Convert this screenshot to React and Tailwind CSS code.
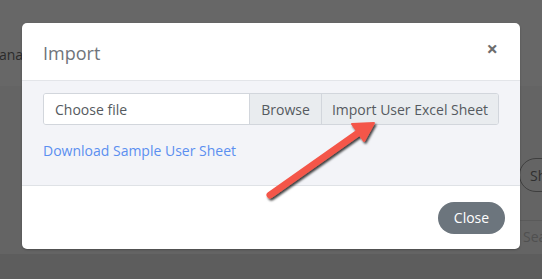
import React from "react";

const App = () => {
  return (
    <div
      className="relative w-[542px] h-[279px] overflow-hidden bg-[#666666]"
      style={{ fontFamily: '"Open Sans", sans-serif' }}
    >
      {/* Page behind the overlay */}
      <div className="absolute inset-0 flex flex-col">
        <div className="h-[86px] bg-[#676767] text-[14px] text-[#2b2b2b] pt-[44px]">
          <span className="-ml-[1px]">ana</span>
        </div>
        <div className="relative h-[168px] bg-[#646464]">
          <div className="absolute left-[519px] top-[72px] h-[34px] w-[60px] rounded-full border border-[#3f3f3f] pl-[10px] pt-[6px] text-[14px] text-[#2f2f2f]">
            Sh
          </div>
          <div className="absolute left-[510px] top-[134px] w-[40px] border-t border-[#5a5a5a] pl-[13px] pt-[5px] text-[14px] text-[#505050]">
            Sea
          </div>
        </div>
        <div className="flex-1 bg-[#5d5d5d]" />
      </div>

      {/* Modal */}
      <div className="absolute left-[22px] top-[23px] w-[498px] h-[226px] rounded-[5px] bg-white flex flex-col overflow-hidden shadow-[0_1px_2px_rgba(0,0,0,0.25)]">
        <div className="h-[58px] flex items-center justify-between pl-[21px] pr-[22px] border-b border-[#e3e5e9]">
          <span className="text-[18px] text-[#70747a] pt-[3px]">Import</span>
          <span className="text-[20px] font-bold text-[#6d6d6d] leading-none -mt-[6px]">×</span>
        </div>
        <div className="h-[105px] bg-[#f3f4f8] border-b border-[#dfe2e6] px-[21px] pt-[12px]">
          <div className="flex h-[32px] w-[456px] rounded-[3px] border border-[#d2d6dc] text-[14px] text-[#555a60] overflow-hidden">
            <div className="w-[205px] bg-white flex items-center pl-[11px]">Choose file</div>
            <div className="w-[72px] bg-[#e9ecef] border-l border-[#d2d6dc] flex items-center justify-center">
              Browse
            </div>
            <div className="flex-1 bg-[#e9ecef] border-l border-[#d2d6dc] flex items-center justify-center">
              Import User Excel Sheet
            </div>
          </div>
          <div className="mt-[15px] text-[14px] text-[#5b8ff0]">Download Sample User Sheet</div>
        </div>
        <div className="flex-1 flex items-center justify-end pr-[15px]">
          <button className="h-[32px] w-[67px] rounded-full bg-[#6c757d] text-white text-[14px]">
            Close
          </button>
        </div>
      </div>

      {/* Arrow annotation */}
      <svg className="absolute left-0 top-0" width="542" height="279" viewBox="0 0 542 279">
        <defs>
          <filter id="sh" x="-20%" y="-20%" width="140%" height="140%">
            <feDropShadow dx="1.5" dy="2" stdDeviation="1.2" floodColor="#000" floodOpacity="0.75" />
          </filter>
        </defs>
        <g filter="url(#sh)">
          <line x1="270" y1="195" x2="358" y2="133" stroke="#f4574a" strokeWidth="7" strokeLinecap="round" />
          <polygon points="374,123 352,124 364,141" fill="#f4574a" stroke="#f4574a" strokeWidth="2" strokeLinejoin="round" />
        </g>
      </svg>
    </div>
  );
};

export default App;
